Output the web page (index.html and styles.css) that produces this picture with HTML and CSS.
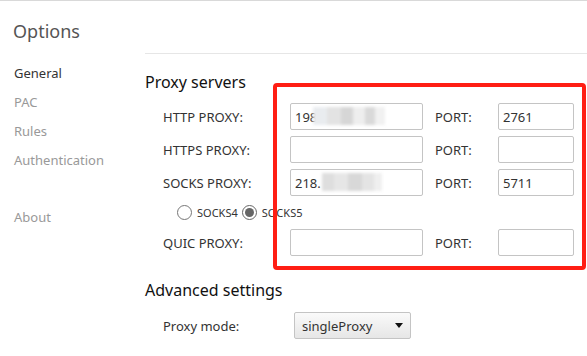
FILE: index.html
```html
<!DOCTYPE html>
<html lang="en">
<head>
    <meta charset="UTF-8" />
    <title>Options</title>
    <link rel="stylesheet" href="styles.css">
</head>
<body>
    <div class="page">
        <aside class="sidebar">
            <h1>Options</h1>
            <nav>
                <a class="nav-item active">General</a>
                <a class="nav-item">PAC</a>
                <a class="nav-item">Rules</a>
                <a class="nav-item">Authentication</a>
                <a class="nav-item about">About</a>
            </nav>
        </aside>
        <main class="content">
            <section class="section">
                <h2>Proxy servers</h2>
                <div class="proxy-grid">
                    <label>HTTP PROXY:</label>
                    <div class="field"><input type="text" value="198"><span class="masked"></span></div>
                    <label class="port-label">PORT:</label>
                    <input type="text" class="port" value="2761">

                    <label>HTTPS PROXY:</label>
                    <input type="text">
                    <label class="port-label">PORT:</label>
                    <input type="text" class="port">

                    <label>SOCKS PROXY:</label>
                    <div class="field"><input type="text" value="218."><span class="masked second"></span></div>
                    <label class="port-label">PORT:</label>
                    <input type="text" class="port" value="5711">

                    <div class="radio-row">
                        <label class="radio"><input type="radio" name="socks"> SOCKS4</label>
                        <label class="radio"><input type="radio" name="socks" checked> SOCKS5</label>
                    </div>

                    <label>QUIC PROXY:</label>
                    <input type="text">
                    <label class="port-label">PORT:</label>
                    <input type="text" class="port">
                </div>
            </section>
            <section class="section">
                <h2>Advanced settings</h2>
                <div class="mode-row">
                    <label>Proxy mode:</label>
                    <div class="select">singleProxy<span class="arrow"></span></div>
                </div>
            </section>
        </main>
    </div>
    <div class="highlight"></div>
</body>
</html>
```

FILE: styles.css
```css
body {
    margin: 0;
    font-family: 'Segoe UI', 'Noto Sans', sans-serif;
    font-size: 13px;
    color: #333;
    background: #fff;
    border-top: 1px solid #d9d9d9;
    height: 355px;
    overflow: hidden;
}
.page {
    display: flex;
}
.sidebar {
    width: 145px;
    flex-shrink: 0;
    padding-left: 13px;
    box-sizing: border-box;
}
.sidebar h1 {
    margin: 18px 0 0;
    font-size: 18px;
    font-weight: 400;
    color: #555;
    line-height: 24px;
}
.sidebar nav {
    display: flex;
    flex-direction: column;
    margin-top: 16px;
    padding-left: 1px;
}
.nav-item {
    color: #999;
    line-height: 29px;
}
.nav-item.active {
    color: #333;
}
.nav-item.about {
    margin-top: 28px;
}
.content {
    flex: 1;
    margin-top: 52px;
    border-top: 1px solid #e6e6e6;
}
.section h2 {
    margin: 0;
    font-size: 16px;
    font-weight: 400;
    color: #111;
    line-height: 22px;
}
.section:first-child h2 {
    padding-top: 17px;
}
.proxy-grid {
    display: grid;
    grid-template-columns: 127px 133px 12px 63px 76px;
    grid-template-rows: 27px 27px 27px 21px 27px;
    row-gap: 6px;
    margin: 10px 0 0 18px;
    align-items: center;
}
.proxy-grid > label {
    color: #333;
}
.proxy-grid .port-label {
    grid-column: 4;
}
.proxy-grid .port {
    grid-column: 5;
}
input[type="text"] {
    box-sizing: border-box;
    width: 100%;
    height: 27px;
    margin: 0;
    padding: 0 4px;
    border: 1px solid #c4c4c4;
    border-radius: 2px;
    font-family: inherit;
    font-size: 13px;
    color: #333;
}
.field {
    position: relative;
    height: 27px;
}
.masked {
    position: absolute;
    top: 4px;
    left: 23px;
    width: 72px;
    height: 18px;
    background: linear-gradient(90deg, #e9ecef 0 14px, #e3e3e3 14px 28px, #d6d6d6 28px 40px, #eeeeee 40px 52px, #d9d9d9 52px 62px, #f1f1f1 62px);
    filter: blur(1.5px);
}
.masked.second {
    left: 32px;
    width: 60px;
    background: linear-gradient(90deg, #dedede 0 12px, #e6e6e6 12px 26px, #d8d8d8 26px 40px, #e4e4e4 40px 52px, #efefef 52px);
}
.radio-row {
    grid-column: 1 / -1;
    height: 21px;
    display: flex;
    align-items: center;
    padding-left: 14px;
    gap: 4px;
    font-size: 11px;
    color: #333;
}
.radio {
    display: flex;
    align-items: center;
}
.radio input {
    width: 15px;
    height: 15px;
    margin: 0 5px 0 0;
    accent-color: #666;
}
.section + .section {
    margin-top: 23px;
}
.mode-row {
    display: grid;
    grid-template-columns: 131px 117px;
    align-items: center;
    margin: 11px 0 0 18px;
}
.select {
    display: flex;
    align-items: center;
    justify-content: space-between;
    height: 27px;
    box-sizing: border-box;
    padding: 0 7px 0 7px;
    border: 1px solid #c4c4c4;
    border-radius: 2px;
    background: linear-gradient(#fafafa, #e6e6e6);
    font-size: 13px;
    color: #333;
}
.arrow {
    width: 0;
    height: 0;
    border-left: 4px solid transparent;
    border-right: 4px solid transparent;
    border-top: 5px solid #111;
}
.highlight {
    position: absolute;
    left: 273px;
    top: 83px;
    width: 313px;
    height: 187px;
    box-sizing: border-box;
    border: 4px solid #ff1e14;
    border-radius: 4px;
}
```
